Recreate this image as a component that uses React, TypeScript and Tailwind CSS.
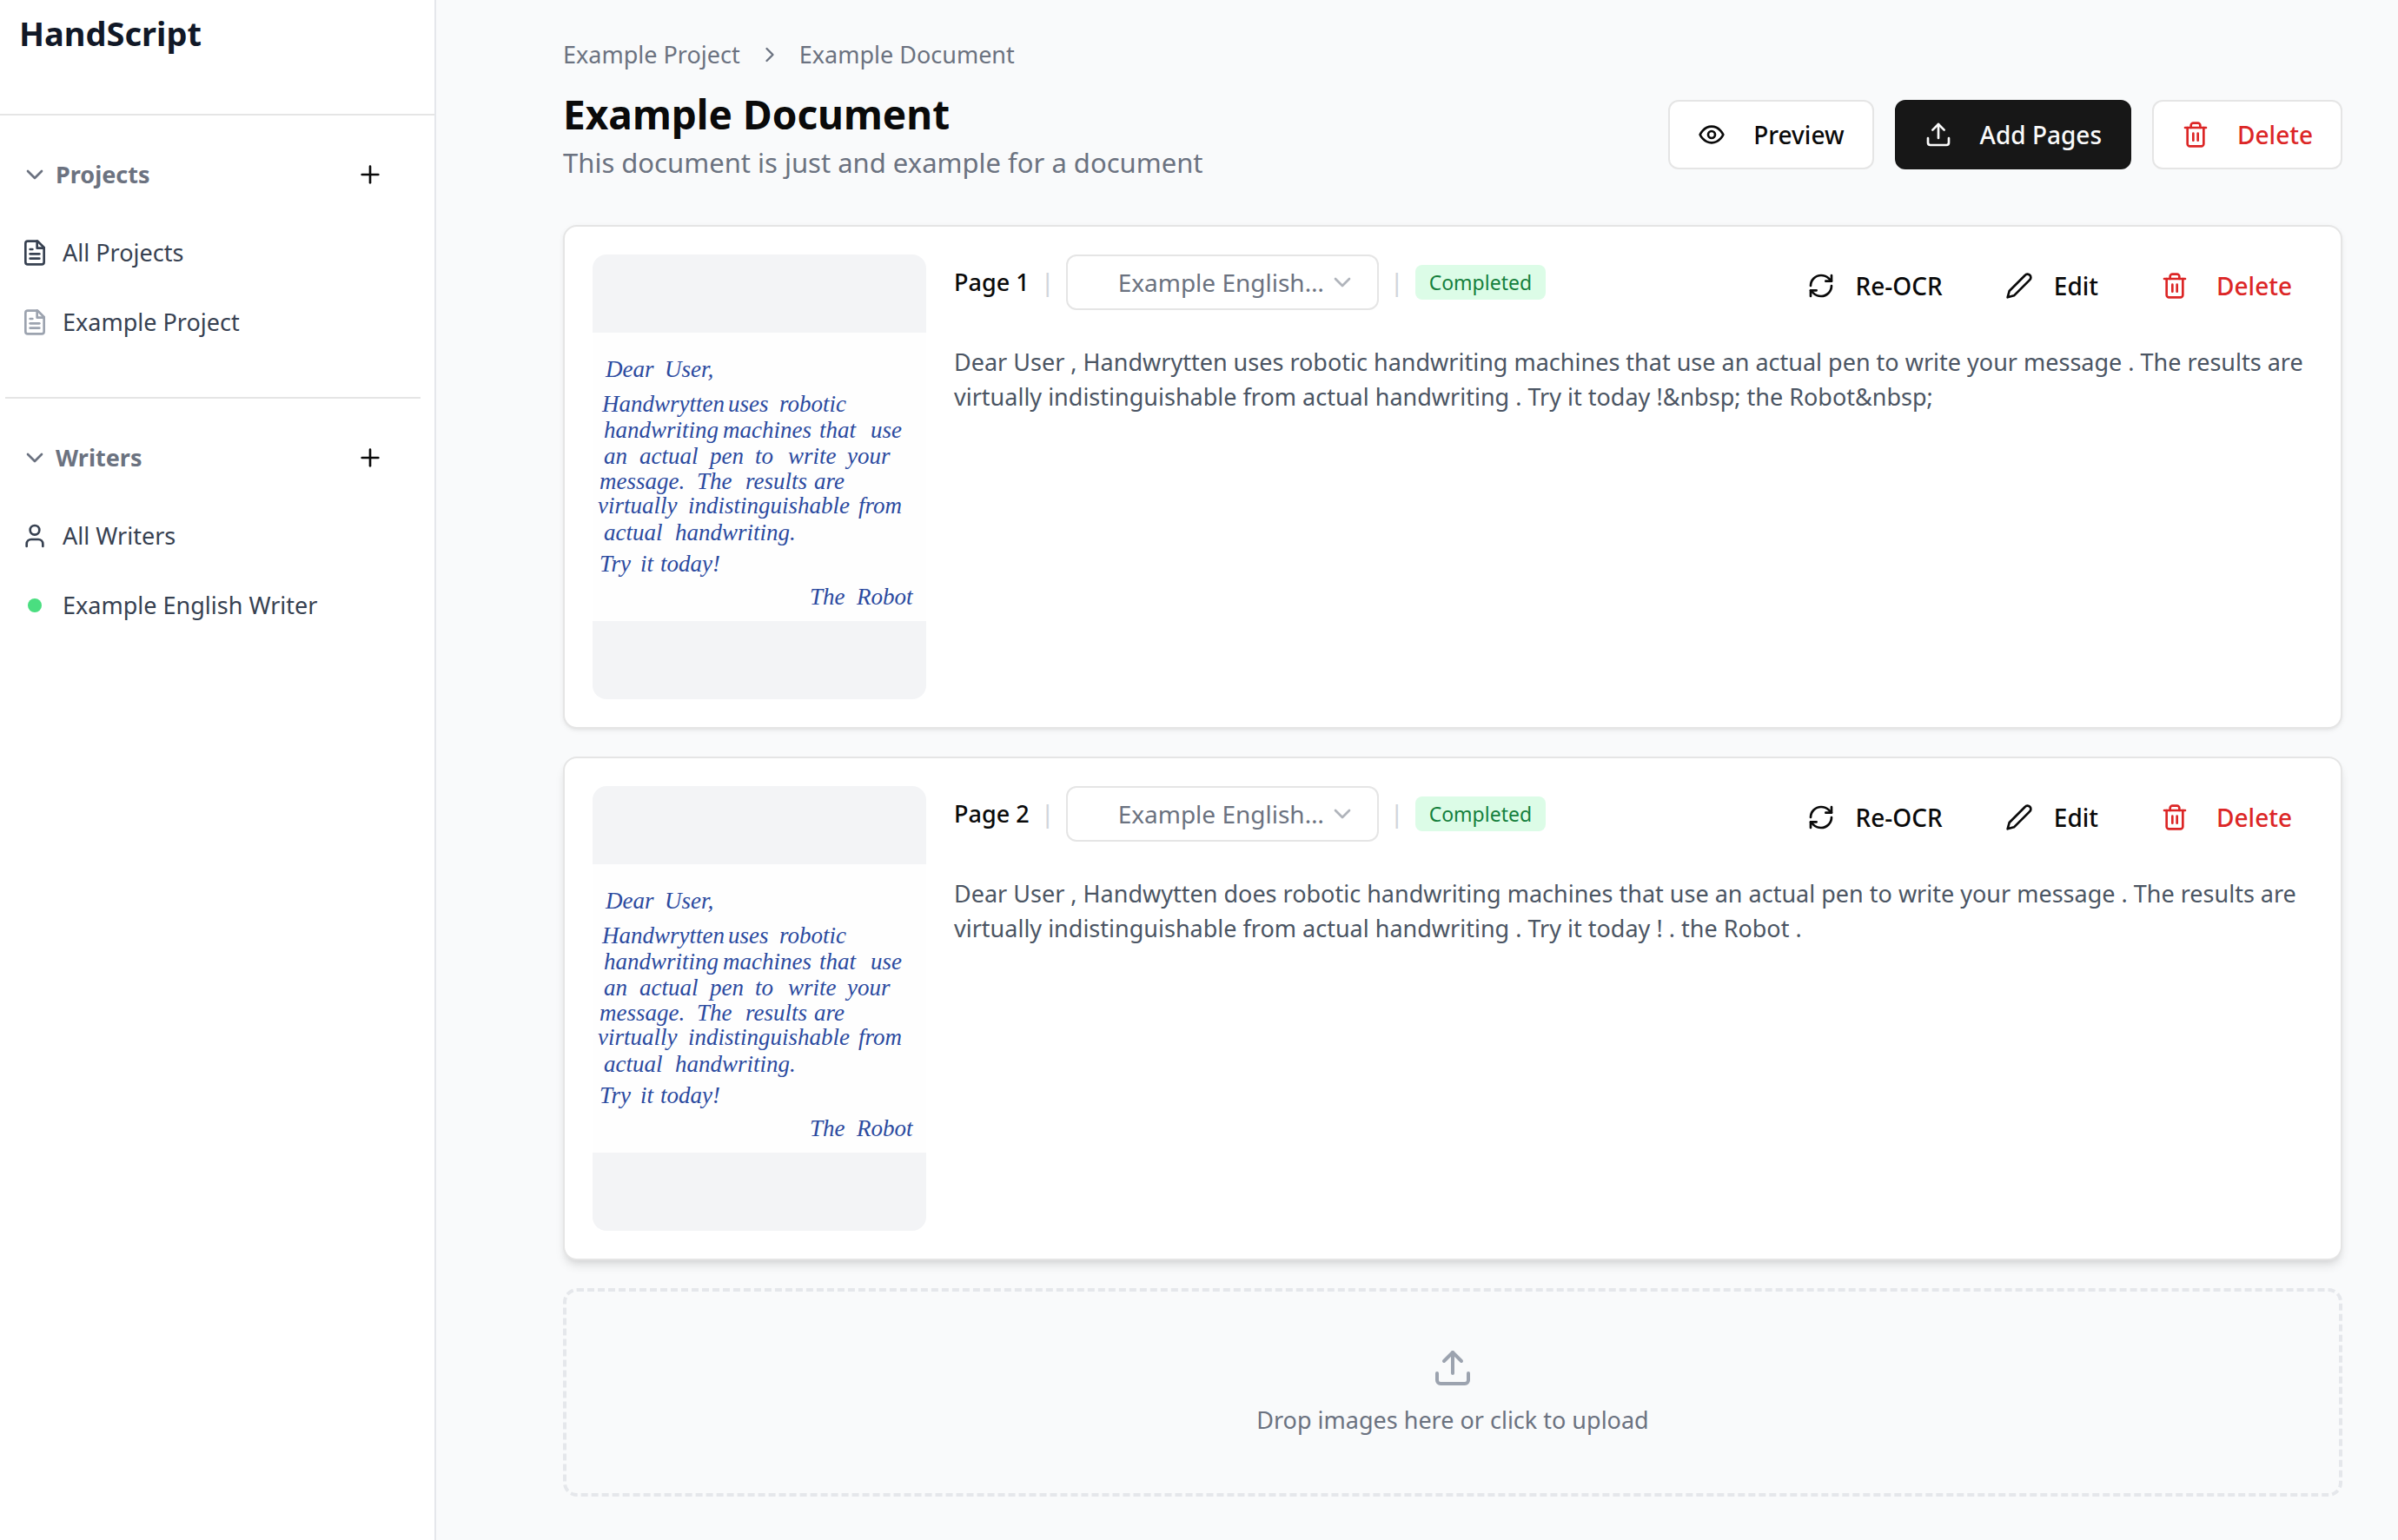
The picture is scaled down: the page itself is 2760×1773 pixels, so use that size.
import type { ReactNode } from 'react';

function Icon({ className, children }: { className: string; children: ReactNode }) {
  return (
    <svg
      className={className}
      viewBox="0 0 24 24"
      fill="none"
      stroke="currentColor"
      strokeWidth={2}
      strokeLinecap="round"
      strokeLinejoin="round"
      aria-hidden="true"
    >
      {children}
    </svg>
  );
}

type IconProps = { className?: string };
const base = 'size-8 shrink-0';

const ChevronDown = ({ className = base }: IconProps) => (
  <Icon className={className}><path d="m6 9 6 6 6-6" /></Icon>
);
const ChevronRight = ({ className = base }: IconProps) => (
  <Icon className={className}><path d="m9 18 6-6-6-6" /></Icon>
);
const Plus = ({ className = base }: IconProps) => (
  <Icon className={className}><path d="M5 12h14" /><path d="M12 5v14" /></Icon>
);
const FileText = ({ className = base }: IconProps) => (
  <Icon className={className}>
    <path d="M14.5 2H6a2 2 0 0 0-2 2v16a2 2 0 0 0 2 2h12a2 2 0 0 0 2-2V7.5L14.5 2z" />
    <path d="M14 2v6h6" />
    <path d="M16 13H8" /><path d="M16 17H8" /><path d="M10 9H8" />
  </Icon>
);
const User = ({ className = base }: IconProps) => (
  <Icon className={className}>
    <path d="M19 21v-2a4 4 0 0 0-4-4H9a4 4 0 0 0-4 4v2" />
    <circle cx="12" cy="7" r="4" />
  </Icon>
);
const Eye = ({ className = base }: IconProps) => (
  <Icon className={className}>
    <path d="M2 12s3-7 10-7 10 7 10 7-3 7-10 7-10-7-10-7Z" />
    <circle cx="12" cy="12" r="3" />
  </Icon>
);
const Upload = ({ className = base }: IconProps) => (
  <Icon className={className}>
    <path d="M21 15v4a2 2 0 0 1-2 2H5a2 2 0 0 1-2-2v-4" />
    <path d="m17 8-5-5-5 5" />
    <path d="M12 3v12" />
  </Icon>
);
const Trash = ({ className = base }: IconProps) => (
  <Icon className={className}>
    <path d="M3 6h18" />
    <path d="M19 6v14c0 1-1 2-2 2H7c-1 0-2-1-2-2V6" />
    <path d="M8 6V4c0-1 1-2 2-2h4c1 0 2 1 2 2v2" />
    <path d="M10 11v6" /><path d="M14 11v6" />
  </Icon>
);
const Refresh = ({ className = base }: IconProps) => (
  <Icon className={className}>
    <path d="M3 12a9 9 0 0 1 9-9 9.75 9.75 0 0 1 6.74 2.74L21 8" />
    <path d="M21 3v5h-5" />
    <path d="M21 12a9 9 0 0 1-9 9 9.75 9.75 0 0 1-6.74-2.74L3 16" />
    <path d="M8 16H3v5" />
  </Icon>
);
const Pencil = ({ className = base }: IconProps) => (
  <Icon className={className}>
    <path d="M17 3a2.85 2.83 0 1 1 4 4L7.5 20.5 2 22l1.5-5.5Z" />
  </Icon>
);

/* Each line of the letter: baseline, then the words with their left edges. */
const letter: { y: number; words: [number, string][] }[] = [
  { y: 51, words: [[15, 'Dear'], [83, 'User,']] },
  { y: 91, words: [[11, 'Handwrytten'], [156, 'uses'], [215, 'robotic']] },
  { y: 121, words: [[13, 'handwriting'], [150, 'machines'], [261, 'that'], [320, 'use']] },
  { y: 151, words: [[13, 'an'], [54, 'actual'], [135, 'pen'], [187, 'to'], [225, 'write'], [293, 'your']] },
  { y: 180, words: [[8, 'message.'], [120, 'The'], [176, 'results'], [255, 'are']] },
  { y: 208, words: [[6, 'virtually'], [110, 'indistinguishable'], [306, 'from']] },
  { y: 239, words: [[13, 'actual'], [95, 'handwriting.']] },
  { y: 275, words: [[8, 'Try'], [55, 'it'], [78, 'today!']] },
  { y: 313, words: [[250, 'The'], [304, 'Robot']] },
];

function Scan() {
  return (
    <div className="flex aspect-[3/4] w-96 shrink-0 items-center overflow-hidden rounded-2xl bg-[#f3f4f6]">
      <svg viewBox="0 0 384 332" className="w-full bg-[#fefefe]" role="img" aria-label="Scanned handwritten letter">
        {letter.map((line) => (
          <text
            key={line.y}
            y={line.y}
            className="fill-[#2b4a9f] font-['Liberation_Serif',serif] text-[27px] italic"
          >
            {line.words.map(([x, word]) => (
              <tspan key={x} x={x}>{word}</tspan>
            ))}
          </text>
        ))}
      </svg>
    </div>
  );
}

function SectionHeader({ title }: { title: string }) {
  return (
    <div className="flex h-18 items-center justify-between pr-[42px] pl-[18px]">
      <button type="button" className="flex items-center gap-2 text-[27px] leading-10 font-bold text-[#6b7280]">
        <ChevronDown />
        {title}
      </button>
      <button type="button" aria-label={`Add to ${title}`} className="text-[#0a0a0a]">
        <Plus />
      </button>
    </div>
  );
}

function NavItem({ icon, children }: { icon: ReactNode; children: ReactNode }) {
  return (
    <a href="#" className="flex h-18 items-center gap-4 px-[18px] text-[27px] leading-10 text-[#374151]">
      <span className="flex size-8 shrink-0 items-center justify-center">{icon}</span>
      {children}
    </a>
  );
}

function Sidebar() {
  return (
    <aside className="min-h-screen w-[502px] shrink-0 border-r-2 border-[#e5e7eb] bg-white">
      <div className="border-b-2 border-[#e5e5e5] px-[22px] pt-2.5 pb-[65px]">
        <div className="text-[38px] leading-14 font-bold text-[#111827]">HandScript</div>
      </div>
      <nav className="pr-4 pl-1.5">
        <section className="border-b-2 border-[#e5e5e5] pt-8 pb-[50px]">
          <SectionHeader title="Projects" />
          <div className="mt-[18px] flex flex-col gap-2">
            <NavItem icon={<FileText />}>All Projects</NavItem>
            <NavItem icon={<FileText className="size-8 text-[#9ca3af]" />}>Example Project</NavItem>
          </div>
        </section>
        <section className="pt-8">
          <SectionHeader title="Writers" />
          <div className="mt-[18px] flex flex-col gap-2">
            <NavItem icon={<User />}>All Writers</NavItem>
            <NavItem icon={<span className="size-4 rounded-full bg-[#4ade80]" />}>Example English Writer</NavItem>
          </div>
        </section>
      </nav>
    </aside>
  );
}

const headButton =
  'flex h-20 items-center gap-8 rounded-xl border-2 px-8 text-[28px] leading-10 font-medium whitespace-nowrap';
const rowButton = 'flex h-18 items-center px-6 text-[28px] leading-10 font-medium whitespace-nowrap';

function Bar() {
  return (
    <span className="flex w-2.5 justify-center text-[27px] leading-10 font-medium text-[#d1d5db]">|</span>
  );
}

function PageCard({ page, text, raised }: { page: number; text: string; raised?: boolean }) {
  const shadow = raised
    ? 'shadow-[0_8px_12px_-2px_rgba(0,0,0,0.1),0_4px_8px_-4px_rgba(0,0,0,0.1)]'
    : 'shadow-[0_2px_6px_0_rgba(0,0,0,0.06),0_2px_4px_-2px_rgba(0,0,0,0.08)]';
  return (
    <article className={`flex gap-8 rounded-2xl border-2 border-[#e5e5e5] bg-white p-8 ${shadow}`}>
      <Scan />
      <div className="min-w-0 flex-1">
        <div className="flex items-start justify-between">
          <div className="flex items-center gap-4">
            <h2 className="text-[27px] leading-10 font-medium whitespace-nowrap text-[#0a0a0a]">Page {page}</h2>
            <Bar />
            <div className="relative w-[360px]">
              <select
                aria-label={`Writer of page ${page}`}
                className="h-16 w-full appearance-none rounded-xl border-2 border-[#e5e5e5] bg-white pr-14 pl-[58px] text-[28px] leading-10 text-[#6b7280]"
              >
                <option>Example English…</option>
              </select>
              <ChevronDown className="pointer-events-none absolute top-4 right-[26px] size-8 text-[#b0b4bb]" />
            </div>
            <Bar />
            <span className="rounded-lg bg-[#dcfce7] px-4 py-1 text-[23px] leading-8 text-[#15803d]">Completed</span>
          </div>
          <div className="flex gap-6 text-[#0a0a0a]">
            <button type="button" className={`${rowButton} gap-6`}><Refresh />Re-OCR</button>
            <button type="button" className={`${rowButton} gap-6`}><Pencil />Edit</button>
            <button type="button" className={`${rowButton} gap-8 text-[#dc2626]`}><Trash />Delete</button>
          </div>
        </div>
        <p className="mt-8 text-[27px] leading-10 text-[#4b5563]">{text}</p>
      </div>
    </article>
  );
}

export default function App() {
  return (
    <div className="flex min-h-screen bg-[#f9fafb] font-['Noto_Sans',sans-serif]">
      <Sidebar />
      <main className="min-w-0 flex-1 pt-[43px] pr-16 pb-12 pl-[146px]">
        <nav aria-label="Breadcrumb" className="flex items-center gap-5 text-[27px] leading-10 text-[#6b7280]">
          <a href="#">Example Project</a>
          <ChevronRight className="size-7" />
          <a href="#">Example Document</a>
        </nav>
        <header className="mt-4 flex items-center justify-between">
          <div>
            <h1 className="text-[46px] leading-16 font-bold text-[#0a0a0a]">Example Document</h1>
            <p className="text-[31px] leading-12 text-[#6b7280]">This document is just and example for a document</p>
          </div>
          <div className="flex gap-6">
            <button type="button" className={`${headButton} border-[#e5e5e5] bg-white text-[#0a0a0a]`}>
              <Eye />Preview
            </button>
            <button type="button" className={`${headButton} border-[#171717] bg-[#171717] text-[#fafafa]`}>
              <Upload />Add Pages
            </button>
            <button type="button" className={`${headButton} border-[#e5e5e5] bg-white text-[#dc2626]`}>
              <Trash />Delete
            </button>
          </div>
        </header>
        <div className="mt-12 flex flex-col gap-8">
          <PageCard
            page={1}
            text="Dear User , Handwrytten uses robotic handwriting machines that use an actual pen to write your message . The results are virtually indistinguishable from actual handwriting . Try it today !&amp;nbsp; the Robot&amp;nbsp;"
          />
          <PageCard
            page={2}
            raised
            text="Dear User , Handwytten does robotic handwriting machines that use an actual pen to write your message . The results are virtually indistinguishable from actual handwriting . Try it today ! . the Robot ."
          />
          <label className="flex cursor-pointer flex-col items-center rounded-2xl border-4 border-dashed border-[#e5e7eb] py-16 text-[27px] leading-10 text-[#6b7280]">
            <Upload className="mb-4 size-12 text-[#9ca3af]" />
            Drop images here or click to upload
            <input type="file" multiple className="sr-only" />
          </label>
        </div>
      </main>
    </div>
  );
}
